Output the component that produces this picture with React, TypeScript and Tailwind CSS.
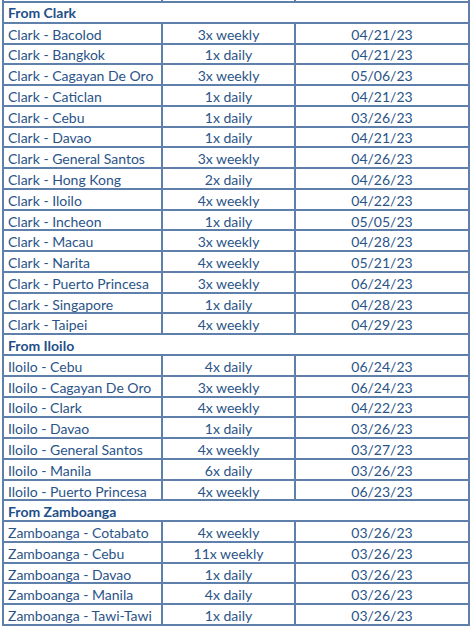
import React from "react"

type Route = { name: string; freq: string; date: string }
type Section = { title: string; routes: Route[] }

const sections: Section[] = [
  {
    title: "From Clark",
    routes: [
      { name: "Clark - Bacolod", freq: "3x weekly", date: "04/21/23" },
      { name: "Clark - Bangkok", freq: "1x daily", date: "04/21/23" },
      { name: "Clark - Cagayan De Oro", freq: "3x weekly", date: "05/06/23" },
      { name: "Clark - Caticlan", freq: "1x daily", date: "04/21/23" },
      { name: "Clark - Cebu", freq: "1x daily", date: "03/26/23" },
      { name: "Clark - Davao", freq: "1x daily", date: "04/21/23" },
      { name: "Clark - General Santos", freq: "3x weekly", date: "04/26/23" },
      { name: "Clark - Hong Kong", freq: "2x daily", date: "04/26/23" },
      { name: "Clark - Iloilo", freq: "4x weekly", date: "04/22/23" },
      { name: "Clark - Incheon", freq: "1x daily", date: "05/05/23" },
      { name: "Clark - Macau", freq: "3x weekly", date: "04/28/23" },
      { name: "Clark - Narita", freq: "4x weekly", date: "05/21/23" },
      { name: "Clark - Puerto Princesa", freq: "3x weekly", date: "06/24/23" },
      { name: "Clark - Singapore", freq: "1x daily", date: "04/28/23" },
      { name: "Clark - Taipei", freq: "4x weekly", date: "04/29/23" },
    ],
  },
  {
    title: "From Iloilo",
    routes: [
      { name: "Iloilo - Cebu", freq: "4x daily", date: "06/24/23" },
      { name: "Iloilo - Cagayan De Oro", freq: "3x weekly", date: "06/24/23" },
      { name: "Iloilo - Clark", freq: "4x weekly", date: "04/22/23" },
      { name: "Iloilo - Davao", freq: "1x daily", date: "03/26/23" },
      { name: "Iloilo - General Santos", freq: "4x weekly", date: "03/27/23" },
      { name: "Iloilo - Manila", freq: "6x daily", date: "03/26/23" },
      { name: "Iloilo - Puerto Princesa", freq: "4x weekly", date: "06/23/23" },
    ],
  },
  {
    title: "From Zamboanga",
    routes: [
      { name: "Zamboanga - Cotabato", freq: "4x weekly", date: "03/26/23" },
      { name: "Zamboanga - Cebu", freq: "11x weekly", date: "03/26/23" },
      { name: "Zamboanga - Davao", freq: "1x daily", date: "03/26/23" },
      { name: "Zamboanga - Manila", freq: "4x daily", date: "03/26/23" },
      { name: "Zamboanga - Tawi-Tawi", freq: "1x daily", date: "03/26/23" },
    ],
  },
]

export default function App() {
  return (
    <div className="w-[474px] h-[628px] bg-white overflow-hidden" style={{ fontFamily: "Lato, 'Open Sans', sans-serif" }}>
      <div className="ml-[2px] w-[468px] border-x-2 border-[#5f80ab] text-[14px] text-[#2a5488]">
        {/* cut-off row at the top */}
        <div className="flex h-[3px] border-b-2 border-[#5f80ab]">
          <div className="w-[159px] border-r-2 border-[#5f80ab]" />
          <div className="w-[133px] border-r-2 border-[#5f80ab]" />
          <div className="flex-1" />
        </div>

        {sections.map((s) => (
          <div key={s.title}>
            <div className="flex h-[20.77px] items-center border-b-2 border-[#5f80ab] pl-[4px] pt-[1px] font-bold text-[#1f4f8a]">
              {s.title}
            </div>
            {s.routes.map((r) => (
              <div key={r.name} className="flex h-[20.77px] border-b-2 border-[#5f80ab]">
                <div className="w-[159px] border-r-2 border-[#5f80ab] pl-[4px] pt-[2px] flex items-center whitespace-nowrap">
                  {r.name}
                </div>
                <div className="w-[133px] border-r-2 border-[#5f80ab] pt-[2px] flex items-center justify-center">
                  {r.freq}
                </div>
                <div className="flex-1 pt-[2px] flex items-center justify-center">{r.date}</div>
              </div>
            ))}
          </div>
        ))}
      </div>
    </div>
  )
}
